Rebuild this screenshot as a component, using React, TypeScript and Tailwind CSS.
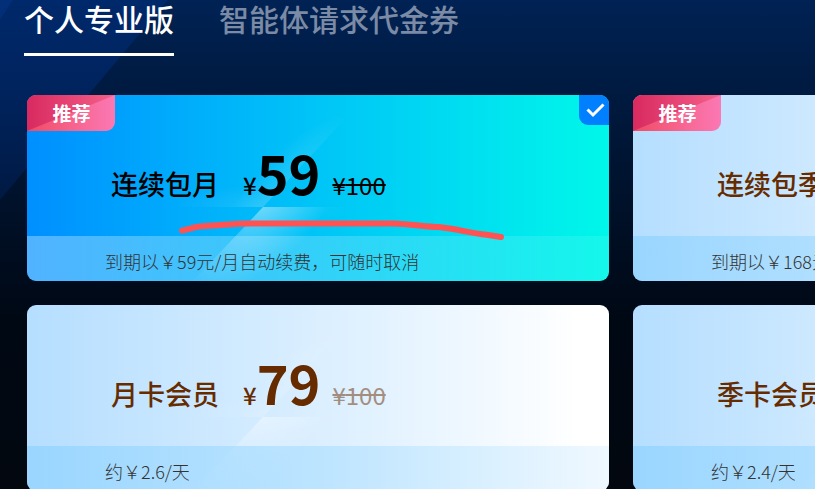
import { useState } from "react";

const tabs = ["个人专业版", "智能体请求代金券"];

const plans = [
  { id: "auto-month", name: "连续包月", price: "59", original: "100", note: "到期以￥59元/月自动续费，可随时取消", recommended: true, marked: true },
  { id: "auto-season", name: "连续包季", price: "168", original: "300", note: "到期以￥168元/季自动续费，可随时取消", recommended: true, marked: false },
  { id: "month", name: "月卡会员", price: "79", original: "100", note: "约￥2.6/天", recommended: false, marked: false },
  { id: "season", name: "季卡会员", price: "218", original: "300", note: "约￥2.4/天", recommended: false, marked: false },
];

type Plan = (typeof plans)[number];

function Backdrop() {
  return (
    <svg className="absolute left-0 top-0 h-[489px] w-[815px]" viewBox="0 0 815 489" aria-hidden="true">
      <defs>
        <linearGradient id="beam" x1="0" y1="0" x2="0" y2="1">
          <stop offset="0" stopColor="#0038a0" stopOpacity="0.3" />
          <stop offset="0.5" stopColor="#0038a0" stopOpacity="0.3" />
          <stop offset="1" stopColor="#0038a0" stopOpacity="0.2" />
        </linearGradient>
      </defs>
      <path d="M0 0H168L0 200Z" fill="url(#beam)" />
      <path d="M0 0H13L0 20Z" fill="#0a50b8" fillOpacity="0.18" />
    </svg>
  );
}

function Shine({ id, strength }: { id: string; strength: number }) {
  return (
    <svg className="absolute left-0 top-0 h-[186px] w-[582px]" viewBox="0 0 582 186" aria-hidden="true">
      <defs>
        <radialGradient id={id + "-low"} gradientUnits="userSpaceOnUse" cx="0" cy="0" r="1" gradientTransform="translate(236 112) rotate(-46) scale(105 52)">
          <stop offset="0" stopColor="#fff" stopOpacity={0.36 * strength} />
          <stop offset="1" stopColor="#fff" stopOpacity="0" />
        </radialGradient>
        <radialGradient id={id + "-up"} gradientUnits="userSpaceOnUse" cx="0" cy="0" r="1" gradientTransform="translate(260 87) rotate(-46) scale(90 28)">
          <stop offset="0" stopColor="#fff" stopOpacity={0.14 * strength} />
          <stop offset="1" stopColor="#fff" stopOpacity="0" />
        </radialGradient>
        <radialGradient id={id + "-line"} gradientUnits="userSpaceOnUse" cx="0" cy="0" r="1" gradientTransform="translate(236 112) scale(90 22)">
          <stop offset="0" stopColor="#fff" stopOpacity={0.1 * strength} />
          <stop offset="1" stopColor="#fff" stopOpacity="0" />
        </radialGradient>
      </defs>
      <path d="M236 112H360V186H166Z" fill={`url(#${id}-low)`} />
      <path d="M236 112L322 20H130V112Z" fill={`url(#${id}-up)`} />
      <path d="M236 112L322 20H130V112Z" fill={`url(#${id}-line)`} />
      <path d="M236 112H360V186H166Z" fill={`url(#${id}-line)`} />
    </svg>
  );
}

function PlanCard({ plan, checked, onSelect }: { plan: Plan; checked: boolean; onSelect: () => void }) {
  return (
    <label
      className={
        "relative block cursor-pointer overflow-hidden rounded-[9px] " +
        (checked
          ? "bg-linear-to-r from-[#008fff] to-[#00f7e9] text-black"
          : "bg-linear-to-r from-[#b5deff] via-[#e2f2ff] via-60% to-white to-95% text-[#662c00]")
      }
    >
      <input type="radio" name="plan" value={plan.id} checked={checked} onChange={onSelect} className="sr-only" />
      <Shine id={plan.id} strength={checked ? 1 : 0.9} />

      <div className="relative flex h-[141px] items-baseline pl-21 pt-[37px]">
        <span className="text-[27px] leading-20 font-medium">{plan.name}</span>
        <span className="ml-6 text-2xl font-medium">¥</span>
        <span className="text-[54px] leading-20 font-bold">{plan.price}</span>
        <del className={"ml-3 text-2xl " + (checked ? "" : "opacity-50")}>¥{plan.original}</del>
      </div>
      <div
        className={
          "relative h-[45px] pl-[78px] pt-1 text-lg leading-[42px] font-light text-[#333] " +
          (checked ? "bg-linear-to-r from-white/32 to-white/8" : "bg-linear-to-r from-[#87d0ff]/60 via-[#a7ddff]/60 to-[#e3f3ff]/60")
        }
      >
        {plan.note}
      </div>

      {plan.recommended && (
        <span className="absolute left-0 top-0 h-9 w-[88px] overflow-hidden rounded-br-[9px] bg-linear-to-r from-[#f04a64] to-[#fb78b4] pl-px text-center text-[19px] leading-9 font-bold text-white">
          <svg className="absolute inset-0 h-full w-full" viewBox="0 0 88 36" aria-hidden="true">
            <defs>
              <linearGradient id={plan.id + "-tag"}>
                <stop offset="0" stopColor="#d82a60" />
                <stop offset="1" stopColor="#f5608a" />
              </linearGradient>
            </defs>
            <path d="M0 0H88L0 36Z" fill={`url(#${plan.id}-tag)`} />
          </svg>
          <span className="relative">推荐</span>
        </span>
      )}
      {checked && (
        <span className="absolute right-0 top-0 h-[30px] w-[30px] rounded-bl-[9px] bg-[#0080ff]">
          <svg className="h-full w-full" viewBox="0 0 30 30" fill="none" stroke="#fff" strokeWidth="3" aria-hidden="true">
            <path d="M8.500 14.500L14 20L24.500 9.500" />
          </svg>
        </span>
      )}
      {plan.marked && (
        <svg className="absolute left-0 top-0 h-[186px] w-[582px]" viewBox="0 0 582 186" fill="none" aria-hidden="true">
          <path
            d="M155 135.500C163 134 169 131 178 131C196 130 209 128.500 222 128.500H366C384 129 400 132 412 132C430 134 448 139 458 139.500L474 142"
            stroke="#ff5252"
            strokeWidth="6"
            strokeLinecap="round"
            strokeLinejoin="round"
          />
        </svg>
      )}
    </label>
  );
}

export default function App() {
  const [tab, setTab] = useState(0);
  const [selected, setSelected] = useState("auto-month");

  return (
    <div className="relative min-h-screen overflow-x-auto bg-linear-to-b from-[#002254] via-[#000814] via-65% to-[#03080f] font-['Noto_Sans_CJK_SC',sans-serif] [scrollbar-width:none]">
      <Backdrop />
      <div className="relative flex gap-[45px] px-6">
        {tabs.map((name, i) => (
          <button
            key={name}
            type="button"
            onClick={() => setTab(i)}
            className={
              "cursor-pointer whitespace-nowrap border-b-3 pb-[17px] text-3xl leading-9 font-medium " +
              (i === tab ? "border-white text-white" : "border-transparent text-[#7b8aa5]")
            }
          >
            {name}
          </button>
        ))}
      </div>

      <div className="relative mt-[39px] grid grid-cols-[repeat(2,minmax(582px,1fr))] gap-6 px-[27px]">
        {plans.map((plan) => (
          <PlanCard key={plan.id} plan={plan} checked={plan.id === selected} onSelect={() => setSelected(plan.id)} />
        ))}
      </div>
    </div>
  );
}
